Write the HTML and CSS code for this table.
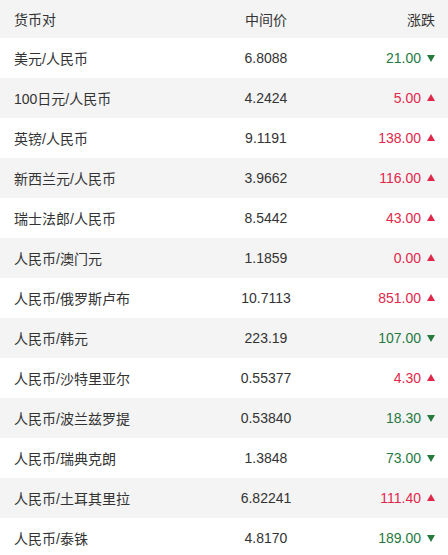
FILE: index.html
```html
<!DOCTYPE html>
<html lang="zh-CN">
<head>
  <meta charset="UTF-8" />
  <title>汇率中间价</title>
  <link rel="stylesheet" href="styles.css">
</head>
<body>
  <div class="rate-table">
    <div class="row head">
      <span>货币对</span><span class="mid">中间价</span><span class="chg">涨跌</span>
    </div>
    <div class="row"><span>美元/人民币</span><span class="mid">6.8088</span><span class="chg down">21.00<i class="tri"></i></span></div>
    <div class="row"><span>100日元/人民币</span><span class="mid">4.2424</span><span class="chg up">5.00<i class="tri"></i></span></div>
    <div class="row"><span>英镑/人民币</span><span class="mid">9.1191</span><span class="chg up">138.00<i class="tri"></i></span></div>
    <div class="row"><span>新西兰元/人民币</span><span class="mid">3.9662</span><span class="chg up">116.00<i class="tri"></i></span></div>
    <div class="row"><span>瑞士法郎/人民币</span><span class="mid">8.5442</span><span class="chg up">43.00<i class="tri"></i></span></div>
    <div class="row"><span>人民币/澳门元</span><span class="mid">1.1859</span><span class="chg up">0.00<i class="tri"></i></span></div>
    <div class="row"><span>人民币/俄罗斯卢布</span><span class="mid">10.7113</span><span class="chg up">851.00<i class="tri"></i></span></div>
    <div class="row"><span>人民币/韩元</span><span class="mid">223.19</span><span class="chg down">107.00<i class="tri"></i></span></div>
    <div class="row"><span>人民币/沙特里亚尔</span><span class="mid">0.55377</span><span class="chg up">4.30<i class="tri"></i></span></div>
    <div class="row"><span>人民币/波兰兹罗提</span><span class="mid">0.53840</span><span class="chg down">18.30<i class="tri"></i></span></div>
    <div class="row"><span>人民币/瑞典克朗</span><span class="mid">1.3848</span><span class="chg down">73.00<i class="tri"></i></span></div>
    <div class="row"><span>人民币/土耳其里拉</span><span class="mid">6.82241</span><span class="chg up">111.40<i class="tri"></i></span></div>
    <div class="row"><span>人民币/泰铢</span><span class="mid">4.8170</span><span class="chg down">189.00<i class="tri"></i></span></div>
  </div>
</body>
</html>
```

FILE: styles.css
```css
body {
  margin: 0;
  background: #fff;
  font-family: "Liberation Sans", Arial, "Noto Sans CJK SC", sans-serif;
  font-size: 14px;
  color: #333;
}

.rate-table {
  width: 448px;
}

.row {
  display: grid;
  grid-template-columns: 202px 100px 1fr;
  align-items: center;
  height: 40px;
  padding: 0 13px 0 14px;
}

.row:nth-child(odd) {
  background: #f4f4f4;
}

.row.head {
  height: 38px;
}

.mid {
  text-align: center;
}

.chg {
  display: flex;
  justify-content: flex-end;
  align-items: center;
}

.tri {
  display: inline-block;
  width: 0;
  height: 0;
  margin-left: 6px;
  border-left: 4.5px solid transparent;
  border-right: 4.5px solid transparent;
}

.up {
  color: #e0284a;
}

.up .tri {
  border-bottom: 7px solid #e0284a;
  margin-top: -1px;
}

.down {
  color: #27793f;
}

.down .tri {
  border-top: 7px solid #27793f;
}
```
